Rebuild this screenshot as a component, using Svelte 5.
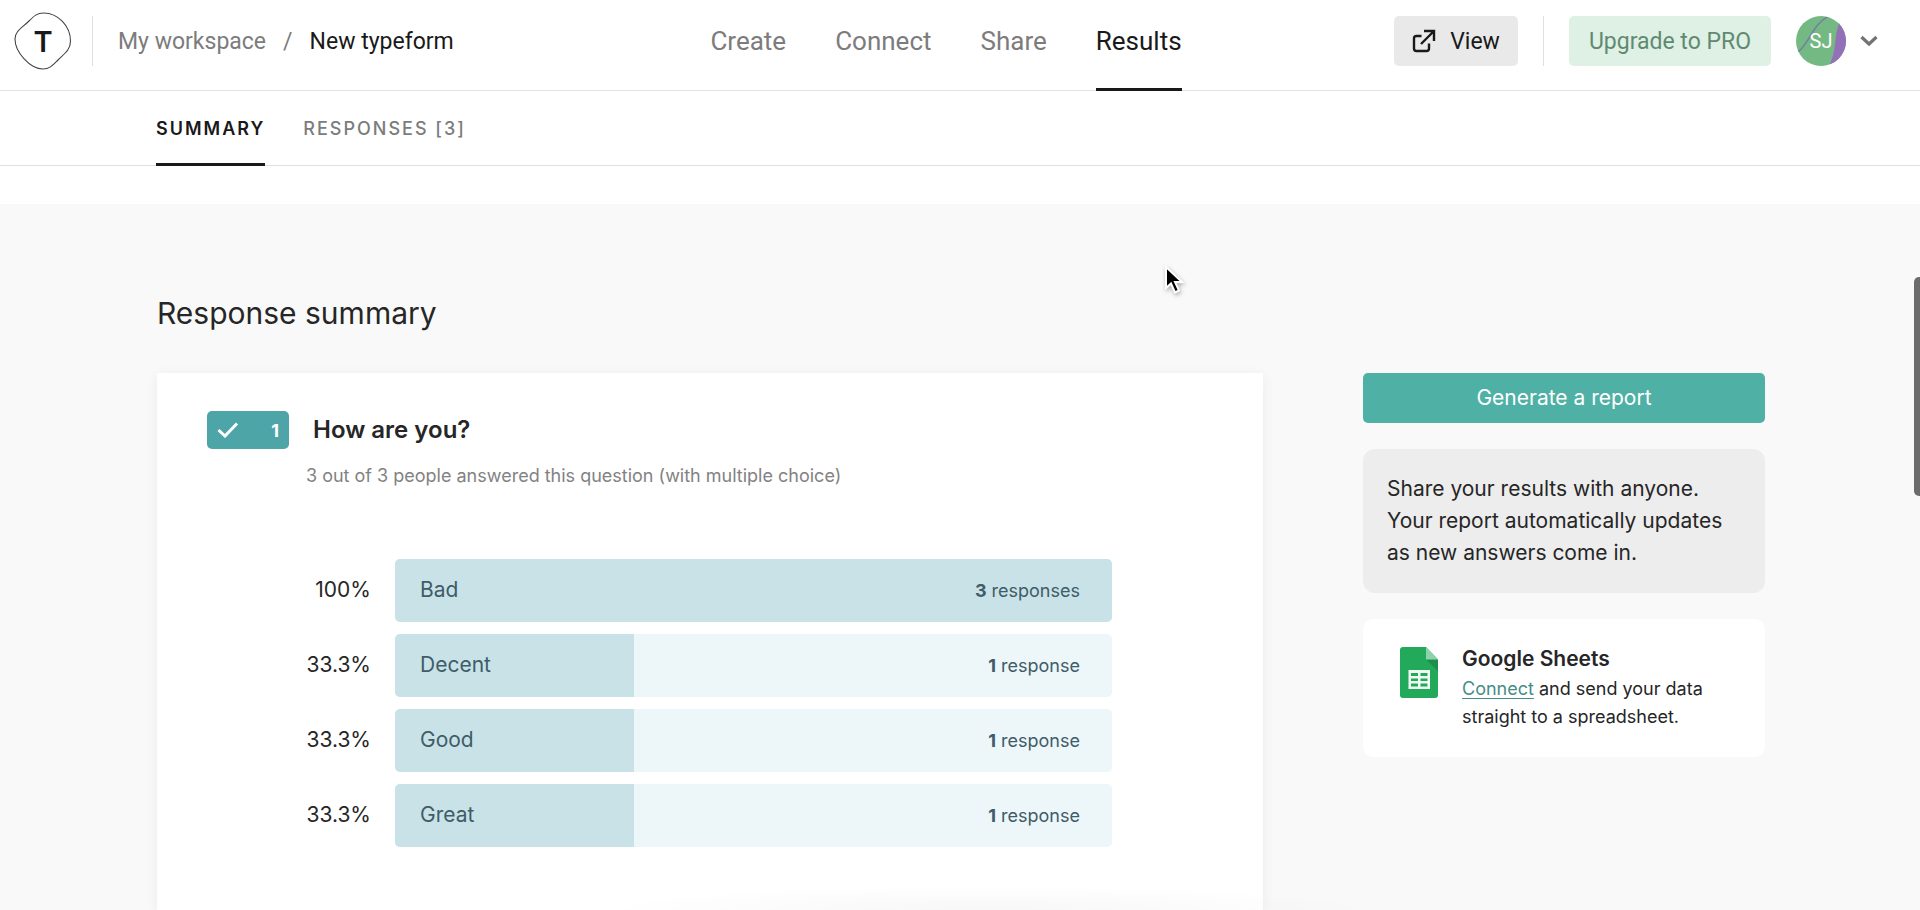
<script lang="ts">
  type Answer = { label: string; count: number; percent: number };

  const tabs = ['Create', 'Connect', 'Share', 'Results'];
  const answers: Answer[] = [
    { label: 'Bad', count: 3, percent: 100 },
    { label: 'Decent', count: 1, percent: 33.3 },
    { label: 'Good', count: 1, percent: 33.3 },
    { label: 'Great', count: 1, percent: 33.3 }
  ];

  let activeTab = $state('Results');
  let activeView = $state('summary');
</script>

<div class="page">
  <header class="topbar">
    <div class="topbar-left">
      <a class="logo" href="#home" aria-label="Home">
        <svg width="58" height="58" viewBox="0 0 58 58">
          <path
            d="M29.500 1C44 1 56.500 14 56.500 29C56.500 38 50 42 44 48C39 53 36 57 29 57C16 57 1 40 1 27C1 19 8 16 15 9C20 4 23 1 29.500 1Z"
            fill="#fff" stroke="#444" stroke-width="1.100"
          />
          <text x="29" y="40" text-anchor="middle">T</text>
        </svg>
      </a>
      <span class="divider"></span>
      <nav class="crumbs" aria-label="Breadcrumb">
        <a href="#workspace">My workspace</a>
        <span class="slash">/</span>
        <a class="current" href="#form">New typeform</a>
      </nav>
    </div>

    <nav class="tabs" aria-label="Form">
      {#each tabs as tab}
        <a href="#{tab.toLowerCase()}" class:active={tab === activeTab} onclick={() => (activeTab = tab)}>{tab}</a>
      {/each}
    </nav>

    <div class="topbar-right">
      <button class="view">
        <svg width="24" height="24" viewBox="0 0 24 24" fill="none" stroke="#191919" stroke-width="2.400">
          <path d="M9.500 7H4.500Q2 7 2 9.500V19.500Q2 22 4.500 22H14.500Q17 22 17 19.500V14.500" />
          <path d="M9 15L22 2M12 2H22V12" />
        </svg>
        View
      </button>
      <span class="divider"></span>
      <button class="upgrade">Upgrade to PRO</button>
      <button class="account" aria-label="Account">
        <svg width="50" height="50" viewBox="0 0 50 50">
          <defs>
            <clipPath id="avatar-clip"><circle cx="25" cy="25" r="25" /></clipPath>
          </defs>
          <g clip-path="url(#avatar-clip)">
            <rect width="50" height="50" fill="#74b984" />
            <path d="M44 6C37 20 42 34 32 52H52V6Z" fill="#9370b8" />
            <path d="M2 36C14 27 17 6 34 0" fill="none" stroke="#75819c" stroke-width="1.600" />
          </g>
          <text x="25" y="32" text-anchor="middle">SJ</text>
        </svg>
        <svg width="18" height="12" viewBox="0 0 18 12" fill="none" stroke="#737373" stroke-width="3.200">
          <path d="M1.500 2L9 9L16.500 2" />
        </svg>
      </button>
    </div>
  </header>

  <nav class="subnav" aria-label="Results">
    <a href="#summary" class:active={activeView === 'summary'} onclick={() => (activeView = 'summary')}>SUMMARY</a>
    <a href="#responses" class:active={activeView === 'responses'} onclick={() => (activeView = 'responses')}>RESPONSES [3]</a>
  </nav>

  <main>
    <h1>Response summary</h1>
    <div class="columns">
      <section class="card">
        <div class="question">
          <span class="badge">
            <svg width="22" height="16" viewBox="0 0 22 16" fill="none" stroke="#fff" stroke-width="3">
              <path d="M1.500 8L8 14L20 1.500" />
            </svg>
            1
          </span>
          <h2>How are you?</h2>
        </div>
        <p class="answered">3 out of 3 people answered this question (with multiple choice)</p>

        <ul class="bars">
          {#each answers as answer}
            <li>
              <span class="percent">{answer.percent}%</span>
              <div class="bar">
                <div class="fill" style="width: {answer.percent}%"></div>
                <span class="label">{answer.label}</span>
                <span class="count"><b>{answer.count}</b> {answer.count === 1 ? 'response' : 'responses'}</span>
              </div>
            </li>
          {/each}
        </ul>
      </section>

      <aside>
        <button class="generate">Generate a report</button>
        <p class="note">Share your results with anyone. Your report automatically updates as new answers come in.</p>
        <div class="sheets">
          <svg width="38" height="51" viewBox="0 0 38 51">
            <path d="M3 0H26L38 12.500V48Q38 51 35 51H3Q0 51 0 48V3Q0 0 3 0Z" fill="#23a95a" />
            <path d="M26 12.500H38V24Z" fill="#1c8f4c" />
            <path d="M26 0L38 12.500H26Z" fill="#8ed1aa" />
            <path
              d="M8.500 23H30V42H8.500ZM11 26V29H18V26ZM20.500 26V29H27.500V26ZM11 31.500V34H18V31.500ZM20.500 31.500V34H27.500V31.500ZM11 36.500V39.500H18V36.500ZM20.500 36.500V39.500H27.500V36.500Z"
              fill="#effaf3" fill-rule="evenodd"
            />
          </svg>
          <div>
            <h3>Google Sheets</h3>
            <p><a href="#connect">Connect</a> and send your data straight to a spreadsheet.</p>
          </div>
        </div>
      </aside>
    </div>
  </main>

  <div class="bottom-shade"></div>
  <div class="scroll-thumb"></div>
  <svg class="pointer" width="22" height="32" viewBox="0 0 22 32">
    <path d="M3 2V23L8 18.500L12 27.500L16 25.500L12 17H19Z" fill="#000" stroke="#fff" stroke-width="2" />
  </svg>
</div>

<style>
  :global(body) {
    margin: 0;
    overflow: hidden;
  }

  .page {
    display: flex;
    flex-direction: column;
    height: 100vh;
    overflow: hidden;
    background: #fff;
    color: #262627;
    font-family: Inter, 'Liberation Sans', sans-serif;
  }

  a {
    color: inherit;
    text-decoration: none;
  }

  button {
    border: 0;
    padding: 0;
    background: none;
    font: inherit;
    cursor: pointer;
  }

  h1, h2, h3, p, ul {
    margin: 0;
    padding: 0;
    font-weight: 400;
  }

  .topbar {
    display: grid;
    grid-template-columns: 1fr auto 1fr;
    flex: none;
    height: 90px;
    padding: 0 42px 0 14px;
    border-bottom: 1px solid #e3e3e3;
    font-family: Roboto, sans-serif;
  }

  .topbar-left,
  .topbar-right {
    display: flex;
    align-items: center;
    height: 82px;
    font-size: 23px;
  }

  .topbar-right {
    justify-content: flex-end;
  }

  .logo {
    display: flex;
  }

  .logo text {
    font: 600 29px Inter, sans-serif;
    fill: #191919;
  }

  .divider {
    width: 1px;
    height: 50px;
    background: #e0e0e0;
  }

  .topbar-left .divider {
    margin: 0 25px 0 20px;
  }

  .crumbs {
    display: flex;
    gap: 17px;
    color: #7c7c7c;
  }

  .crumbs .current {
    color: #191919;
  }

  .tabs {
    display: flex;
    gap: 49px;
    height: 91px;
    color: #7c7c7c;
    font-size: 26px;
    line-height: 82px;
  }

  .tabs a,
  .subnav a {
    box-sizing: border-box;
    border-bottom: 3px solid transparent;
  }

  .tabs .active,
  .subnav .active {
    border-color: #191919;
    color: #191919;
  }

  .view,
  .upgrade {
    height: 50px;
    border-radius: 5px;
  }

  .view {
    display: flex;
    align-items: center;
    gap: 14px;
    padding: 0 18px;
    background: #e9e9e9;
    color: #191919;
  }

  .topbar-right .divider {
    margin: 0 25px;
  }

  .upgrade {
    padding: 0 20px;
    background: #dff0e4;
    color: #5f8a72;
  }

  .account {
    display: flex;
    align-items: center;
    gap: 14px;
    margin-left: 25px;
  }

  .account text {
    font: 20px Roboto, sans-serif;
    fill: #fff;
  }

  .subnav {
    display: flex;
    flex: none;
    gap: 38px;
    height: 74px;
    padding: 0 156px;
    border-bottom: 1px solid #e0e0e0;
    color: #7c7c7c;
    font: 500 18px/76px Inter, sans-serif;
    letter-spacing: 2px;
  }

  .subnav a {
    height: 75px;
  }

  .subnav .active {
    font-weight: 600;
  }

  main {
    display: flex;
    flex: 1;
    flex-direction: column;
    gap: 40px;
    min-height: 0;
    box-sizing: border-box;
    margin-top: 38px;
    padding: 89px 155px 0 157px;
    background: #f9f9f9;
  }

  h1 {
    font-size: 30px;
    line-height: 40px;
  }

  .columns {
    display: grid;
    grid-template-columns: minmax(0, 1fr) 402px;
    flex: 1;
    gap: 100px;
    min-height: 0;
  }

  .card {
    box-sizing: border-box;
    padding: 38px 50px 0;
    background: #fff;
    box-shadow: 0 2px 12px rgba(0, 0, 0, 0.06);
  }

  .question {
    display: flex;
    align-items: center;
    gap: 24px;
  }

  .badge {
    display: flex;
    align-items: center;
    justify-content: space-between;
    box-sizing: border-box;
    width: 82px;
    height: 38px;
    padding: 0 10px;
    border-radius: 5px;
    background: #4da5a8;
    color: #fff;
    font-size: 18px;
    font-weight: 700;
  }

  h2 {
    font-size: 24px;
    font-weight: 600;
    line-height: 38px;
  }

  .answered {
    margin: 12px 0 0 99px;
    color: #828282;
    font-size: 18px;
    line-height: 30px;
  }

  .bars {
    display: grid;
    gap: 12px;
    margin: 68px 101px 0 0;
    list-style: none;
  }

  .bars li {
    display: grid;
    grid-template-columns: 164px 1fr;
    align-items: center;
    gap: 24px;
    font-size: 21px;
  }

  .percent,
  .label {
    padding-bottom: 2px;
  }

  .percent {
    text-align: right;
  }

  .bar {
    position: relative;
    display: flex;
    align-items: center;
    justify-content: space-between;
    height: 63px;
    padding: 0 32px 0 25px;
    border-radius: 5px;
    background: #edf6f8;
    color: #3f5c68;
    overflow: hidden;
  }

  .fill {
    position: absolute;
    inset: 0 auto 0 0;
    background: #c8e2e7;
  }

  .label,
  .count {
    position: relative;
  }

  .count {
    font-size: 18px;
  }

  aside {
    display: flex;
    flex-direction: column;
    gap: 26px;
  }

  .generate {
    height: 50px;
    padding-bottom: 2px;
    border-radius: 5px;
    background: #4fb0a5;
    color: #fff;
    font-size: 21px;
  }

  .note {
    padding: 24px;
    border-radius: 12px;
    background: #ededed;
    font-size: 21px;
    line-height: 32px;
  }

  .sheets {
    display: flex;
    align-items: flex-start;
    gap: 24px;
    padding: 24px 37px 26px;
    border-radius: 10px;
    background: #fff;
  }

  .sheets svg {
    flex: none;
    margin-top: 4px;
  }

  h3 {
    font-size: 21px;
    font-weight: 600;
    line-height: 32px;
  }

  .sheets p {
    font-size: 18px;
    line-height: 28px;
  }

  .sheets a {
    color: #458d86;
    text-decoration: underline;
    text-underline-offset: 3px;
  }

  .bottom-shade {
    position: fixed;
    bottom: 0;
    left: 31%;
    right: 28%;
    height: 24px;
    background: radial-gradient(ellipse at bottom, rgba(0, 0, 0, 0.03), transparent 70%);
    pointer-events: none;
  }

  .scroll-thumb {
    position: fixed;
    top: 277px;
    right: 0;
    width: 6px;
    height: 219px;
    border-radius: 5px 0 0 5px;
    background: #6c6c6c;
  }

  .pointer {
    position: fixed;
    top: 265px;
    left: 1163px;
    filter: drop-shadow(1px 2px 2px rgba(0, 0, 0, 0.3));
    pointer-events: none;
  }
</style>
